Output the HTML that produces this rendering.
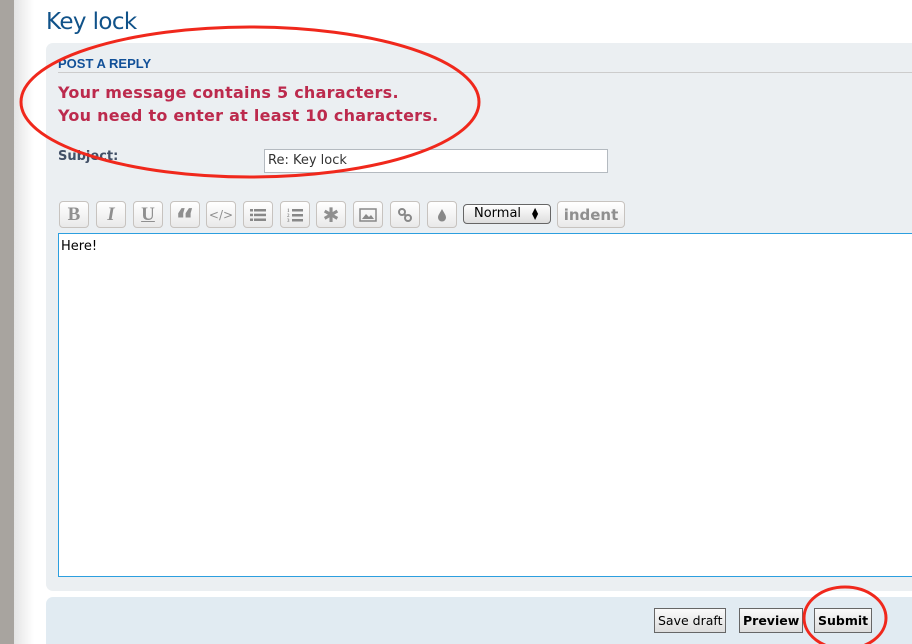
<!DOCTYPE html>
<html><head><meta charset="utf-8"><style>
*{margin:0;padding:0;box-sizing:border-box}
html,body{width:912px;height:644px;overflow:hidden}
body{background:#fff;font-family:"Liberation Sans","DejaVu Sans",sans-serif;position:relative}
.lbar{position:absolute;left:0;top:0;width:14px;height:644px;background:#a8a49f}
.lgrad{position:absolute;left:14px;top:0;width:20px;height:644px;background:linear-gradient(to right,#e4e4e4,#fff)}
h1{position:absolute;left:46px;top:9px;font-size:23px;font-weight:normal;color:#105289;font-family:"DejaVu Sans",sans-serif;letter-spacing:-0.6px}
.panel{position:absolute;left:46px;top:43px;width:880px;height:548px;background:#ebeff2;border-radius:7px}
.h3{position:absolute;left:58px;top:56px;font-size:13px;font-weight:bold;color:#115098}
.hr{position:absolute;left:58px;top:72px;width:860px;height:1px;background:#ccc}
.err{position:absolute;left:58px;top:81px;font-size:16px;font-weight:bold;color:#bc2a4d;line-height:23px;font-family:"DejaVu Sans",sans-serif;letter-spacing:0.25px}
.subj{position:absolute;left:58px;top:149px;font-size:13px;font-weight:bold;color:#425067;font-family:"DejaVu Sans",sans-serif}
.inp{position:absolute;left:264px;top:149px;width:344px;height:24px;background:#fff;border:1px solid #b4bac0;font-size:13px;padding:3px 3px;font-family:"DejaVu Sans",sans-serif;color:#333}
.tb{position:absolute;top:201px;width:30px;height:27px;border:1px solid #c7c3bf;border-radius:4px;background:linear-gradient(#fff,#e9e9e9);color:#8f8f8f;display:flex;align-items:center;justify-content:center;font-size:16px;font-family:"Liberation Serif",serif;font-weight:bold}
.sel{position:absolute;left:463px;top:204px;width:88px;height:20px;border:1px solid #666;border-radius:4px;background:linear-gradient(#fff,#ddd);font-size:13px;padding:1px 10px;font-family:"DejaVu Sans",sans-serif}
.ta{position:absolute;left:58px;top:233px;width:860px;height:344px;background:#fff;border:1px solid #2c9fdf;font-size:13px;padding:5px 2px;font-family:"DejaVu Sans",sans-serif}
.panel2{position:absolute;left:46px;top:597px;width:880px;height:47px;background:#e1ebf2;border-radius:7px 7px 0 0}
.btn{position:absolute;top:608px;height:25px;border:1px solid #666;background:linear-gradient(#fafafa,#ddd);font-size:12.5px;font-family:"DejaVu Sans",sans-serif;padding:4px 3px;color:#000}
</style></head><body>
<div class="lbar"></div><div class="lgrad"></div>
<h1>Key lock</h1>
<div class="panel"></div>
<div class="h3">POST A REPLY</div>
<div class="hr"></div>
<div class="err">Your message contains 5 characters.<br>You need to enter at least 10 characters.</div>
<div class="subj">Subject:</div>
<div class="inp">Re: Key lock</div>
<div class="tb" style="left:59px;font-size:19px">B</div>
<div class="tb" style="left:96px;font-style:italic;font-size:19px">I</div>
<div class="tb" style="left:133px;text-decoration:underline;font-size:19px">U</div>
<div class="tb" style="left:170px;font-size:30px;padding-top:12px;font-family:'DejaVu Sans'">“</div>
<div class="tb" style="left:206px;font-size:12px;font-family:'DejaVu Sans';font-weight:normal">&lt;/&gt;</div>
<div class="tb" style="left:243px"><svg width="18" height="14"><g fill="#888"><rect x="1" y="1" width="3" height="2.5"/><rect x="5" y="1" width="12" height="2.5"/><rect x="1" y="5.7" width="3" height="2.5"/><rect x="5" y="5.7" width="12" height="2.5"/><rect x="1" y="10.5" width="3" height="2.5"/><rect x="5" y="10.5" width="12" height="2.5"/></g></svg></div>
<div class="tb" style="left:280px"><svg width="18" height="16"><g fill="#888"><rect x="6" y="2" width="11" height="2.5"/><rect x="6" y="7" width="11" height="2.5"/><rect x="6" y="12" width="11" height="2.5"/></g><text x="1" y="5" font-size="5" fill="#888">1</text><text x="1" y="10" font-size="5" fill="#888">2</text><text x="1" y="15" font-size="5" fill="#888">3</text></svg></div>
<div class="tb" style="left:316px;font-size:20px;font-family:'DejaVu Sans'">✱</div>
<div class="tb" style="left:353px"><svg width="18" height="14"><rect x="1" y="1" width="16" height="12" fill="none" stroke="#888" stroke-width="1.5"/><path d="M3 11 L7 6 L10 9 L12 7 L15 11Z" fill="#888"/></svg></div>
<div class="tb" style="left:390px"><svg width="16" height="16"><circle cx="5" cy="5" r="3" fill="none" stroke="#888" stroke-width="2"/><circle cx="11" cy="11" r="3" fill="none" stroke="#888" stroke-width="2"/><path d="M7 7L9 9" stroke="#888" stroke-width="2"/></svg></div>
<div class="tb" style="left:427px"><svg width="10" height="14"><path d="M5 1 C7 5 9 7 9 9.5 A4 4 0 0 1 1 9.5 C1 7 3 5 5 1Z" fill="#888"/></svg></div>
<div class="sel">Normal <span style="float:right;font-size:8px;margin-top:2px;line-height:6px;display:inline-block;width:8px">▲<br>▼</span></div>
<div class="tb" style="left:557px;width:68px;font-family:'DejaVu Sans';font-size:15px">indent</div>
<div class="ta">Here!</div>
<div class="panel2"></div>
<div class="btn" style="left:654px">Save draft</div>
<div class="btn" style="left:739px;font-weight:bold">Preview</div>
<div class="btn" style="left:814px;font-weight:bold">Submit</div>
<svg style="position:absolute;left:0;top:0" width="912" height="644">
<ellipse cx="250" cy="102" rx="229" ry="75" fill="none" stroke="#f0281c" stroke-width="3"/>
<ellipse cx="845" cy="618" rx="41" ry="31" fill="none" stroke="#f0281c" stroke-width="3"/>
</svg>
</body></html>
